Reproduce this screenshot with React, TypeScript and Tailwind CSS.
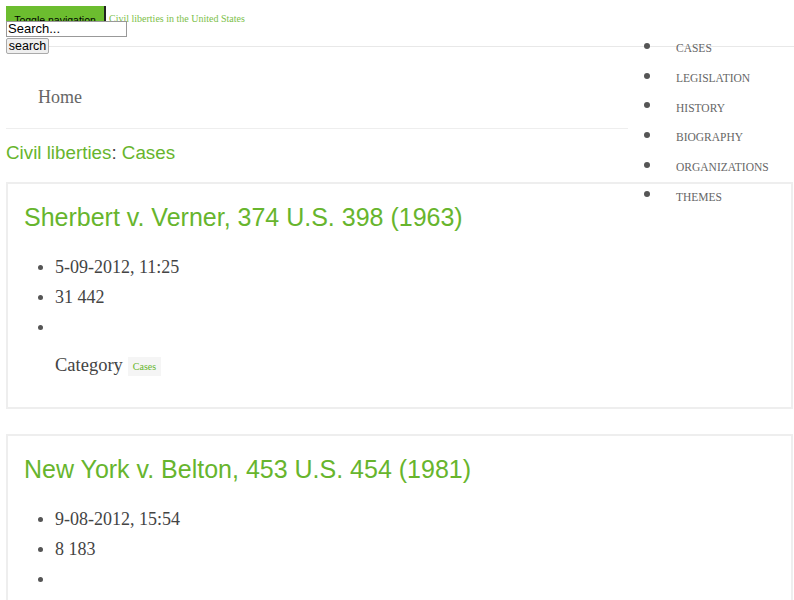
import React from "react";

const nav = ["CASES", "LEGISLATION", "HISTORY", "BIOGRAPHY", "ORGANIZATIONS", "THEMES"];

type Item = { title: string; date: string; views: string; category?: boolean };

const items: Item[] = [
  { title: "Sherbert v. Verner, 374 U.S. 398 (1963)", date: "5-09-2012, 11:25", views: "31 442", category: true },
  { title: "New York v. Belton, 453 U.S. 454 (1981)", date: "9-08-2012, 15:54", views: "8 183", category: true },
];

const Dot = () => <span className="inline-block w-[5px] h-[5px] rounded-full bg-[#555] shrink-0" />;

function Card({ item }: { item: Item }) {
  return (
    <div className="border-2 border-[#eee] pl-[16px] pt-[19px] pb-[29px] mb-[25px] -mr-[5px]">
      <h2 className="font-['Liberation_Sans',Arial,sans-serif] text-[25px] leading-[28px] text-[#67b52d]">{item.title}</h2>
      <ul className="mt-[21px] ml-[14px] font-['Liberation_Serif','Times_New_Roman',serif] text-[18px] text-[#444]">
        <li className="flex items-center h-[30px] gap-[12px]"><Dot />{item.date}</li>
        <li className="flex items-center h-[30px] gap-[12px]"><Dot />{item.views}</li>
        <li className="flex items-center h-[30px] gap-[12px]"><Dot /></li>
      </ul>
      {item.category && (
        <div className="mt-[12px] ml-[31px] flex items-center h-[24px] font-['Liberation_Serif','Times_New_Roman',serif] text-[18.5px] text-[#444]">
          Category
          <span className="ml-[5px] bg-[#f5f5f5] px-[5px] h-[19px] flex items-center text-[10px] text-[#67b52d]">Cases</span>
        </div>
      )}
    </div>
  );
}

export default function App() {
  return (
    <div className="relative w-[794px] h-[600px] overflow-hidden bg-white px-[6px] pt-[6px]">
      {/* top bar */}
      <div className="flex items-start">
        <button className="w-[100px] h-[24px] bg-[#6cbd2f] border-r-2 border-[#222] text-[10.5px] text-black font-['Liberation_Sans',Arial,sans-serif] pt-[4px] leading-[12px]">
          Toggle navigation
        </button>
        <span className="ml-[3px] mt-[7px] font-['Liberation_Serif','Times_New_Roman',serif] text-[10px] leading-[12px] text-[#7cc04a]">
          Civil liberties in the United States
        </span>
      </div>
      <input
        readOnly
        value="Search..."
        className="relative -mt-[9px] block w-[121px] h-[16px] border border-[#999] bg-white px-[1px] text-[13px] text-black font-['Liberation_Sans',Arial,sans-serif] outline-none"
      />
      <div className="flex items-center mt-[1px]">
        <button className="w-[43px] h-[16px] bg-[#efefef] border border-[#aaa] rounded-[2px] text-[12.5px] leading-[14px] text-black font-['Liberation_Sans',Arial,sans-serif]">
          search
        </button>
        <div className="flex-1 h-px bg-[#e8e8e8] -mr-[6px]" />
      </div>

      {/* breadcrumb bar */}
      <div className="w-[622px] border-b border-[#eee] pl-[32px] pt-[31px] pb-[19px] font-['Liberation_Serif','Times_New_Roman',serif] text-[18px] leading-[24px] text-[#666]">
        Home
      </div>

      <h1 className="mt-[13px] mb-[18px] font-['Liberation_Sans',Arial,sans-serif] text-[18.8px] leading-[22px] text-[#67b52d]">
        Civil liberties<span className="text-[#444]">:</span> Cases
      </h1>

      {items.map((it) => (
        <Card key={it.title} item={it} />
      ))}

      {/* dropdown nav overlay */}
      <ul className="absolute left-[644px] top-[34px] font-['Liberation_Serif','Times_New_Roman',serif] text-[11.5px] text-[#666]">
        {nav.map((n) => (
          <li key={n} className="flex items-center h-[29.7px]">
            <span className="w-[6px] h-[6px] rounded-full bg-[#555] -mt-[6px]" />
            <span className="ml-[26px]">{n}</span>
          </li>
        ))}
      </ul>
    </div>
  );
}
